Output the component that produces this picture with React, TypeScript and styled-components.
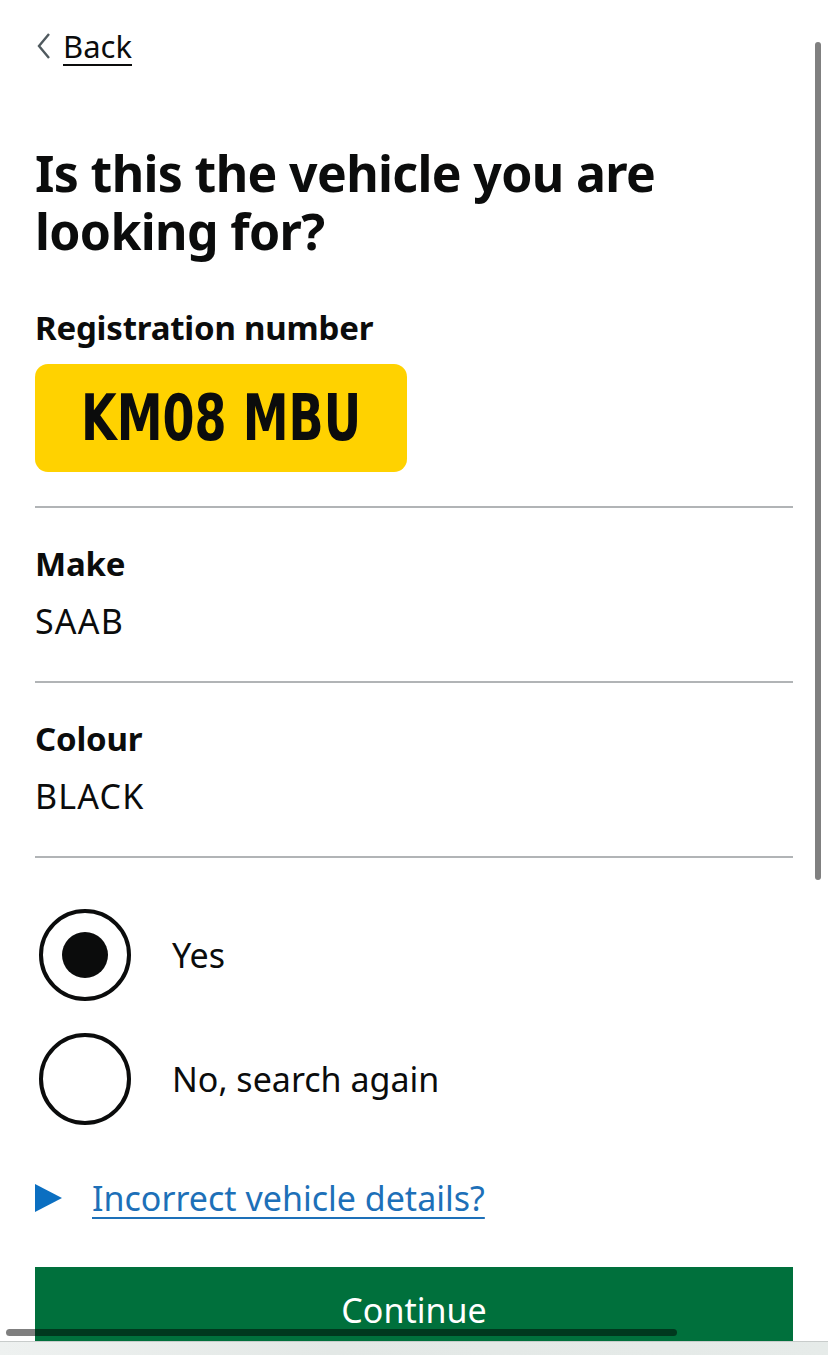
import React from "react";
import styled, { createGlobalStyle } from "styled-components";

const Global = createGlobalStyle`
  html, body { margin: 0; padding: 0; background: #ffffff; }
  body { font-family: "Noto Sans", "Open Sans", Arial, sans-serif; color: #0b0c0c; overflow: hidden; }
  * { box-sizing: border-box; }
`;

const Screen = styled.div`
  position: relative;
  width: 828px;
  height: 1355px;
  overflow: hidden;
  background: #ffffff;
`;

const Main = styled.main`
  display: flex;
  flex-direction: column;
  padding: 26px 35px 0;
`;

const BackLink = styled.a`
  display: inline-flex;
  align-items: center;
  gap: 10px;
  align-self: flex-start;
  font-size: 31px;
  line-height: 40px;
  color: #0b0c0c;
  text-decoration: underline;
  text-decoration-thickness: 2px;
  text-underline-offset: 6px;
`;

const Chevron = styled.svg`
  width: 18px;
  height: 28px;
  flex: none;
`;

const Heading = styled.h1`
  margin: 78px 0 0;
  font-size: 50px;
  line-height: 58px;
  font-weight: 700;
  letter-spacing: -0.65px;
`;

const Section = styled.section<{ $first?: boolean }>`
  display: flex;
  flex-direction: column;
  padding: ${(p) => (p.$first ? "48px 0 34px" : "36px 0 40px")};
  border-bottom: 2px solid #b1b4b6;
`;

const Key = styled.div`
  font-size: 33px;
  font-weight: 700;
  line-height: 40px;
  letter-spacing: -0.2px;
`;

const Value = styled.div`
  font-size: 34px;
  line-height: 40px;
  letter-spacing: 1.2px;
  margin-top: 17px;
`;

const Plate = styled.div`
  margin-top: 16px;
  width: 372px;
  height: 108px;
  border-radius: 13px;
  background: #ffd200;
  display: flex;
  align-items: center;
  justify-content: center;
  overflow: hidden;
`;

const PlateText = styled.span`
  display: inline-block;
  white-space: nowrap;
  font-family: "DejaVu Sans Condensed", "DejaVu Sans", sans-serif;
  font-stretch: condensed;
  font-weight: 700;
  font-size: 64px;
  line-height: 1;
  color: #0b0c0c;
  transform: scaleX(0.8);
`;

const Radios = styled.div`
  display: flex;
  flex-direction: column;
  gap: 32px;
  margin-top: 51px;
`;

const RadioRow = styled.label`
  display: flex;
  align-items: center;
  gap: 41px;
  padding-left: 4px;
  font-size: 34px;
  line-height: 40px;
`;

const RadioCircle = styled.span<{ $checked?: boolean }>`
  width: 92px;
  height: 92px;
  border-radius: 50%;
  border: 4px solid #0b0c0c;
  flex: none;
  display: flex;
  align-items: center;
  justify-content: center;
  &::after {
    content: "";
    width: 46px;
    height: 46px;
    border-radius: 50%;
    background: #0b0c0c;
    display: ${(p) => (p.$checked ? "block" : "none")};
  }
`;

const Details = styled.div`
  display: flex;
  align-items: center;
  gap: 30px;
  margin-top: 53px;
  font-size: 34px;
  line-height: 40px;
  color: #1d70b8;
`;

const Triangle = styled.span`
  width: 0;
  height: 0;
  border-top: 14px solid transparent;
  border-bottom: 14px solid transparent;
  border-left: 27px solid #0b6fc1;
  flex: none;
`;

const DetailsLink = styled.a`
  color: #1d70b8;
  text-decoration: underline;
  text-decoration-thickness: 2px;
  text-underline-offset: 6px;
`;

const Button = styled.button`
  margin-top: 49px;
  width: 100%;
  height: 90px;
  border: none;
  background: #00703c;
  color: #ffffff;
  font-family: inherit;
  font-size: 34px;
  line-height: 40px;
  padding: 23px 0 0;
  display: flex;
  justify-content: center;
  align-items: flex-start;
`;

const VScroll = styled.div`
  position: absolute;
  top: 42px;
  right: 7px;
  width: 6px;
  height: 838px;
  border-radius: 3px;
  background: #808080;
`;

const HScroll = styled.div`
  position: absolute;
  left: 6px;
  top: 1329px;
  width: 671px;
  height: 7px;
  border-radius: 4px;
  background: rgba(0, 0, 0, 0.5);
`;

const Chrome = styled.div`
  position: absolute;
  left: 0;
  right: 0;
  bottom: 0;
  height: 14px;
  border-top: 1px solid #c8cccb;
  background: linear-gradient(90deg, #eef1f0, #e3e8e6 40%, #e6ebe9);
`;

export default function App() {
  return (
    <Screen>
      <Global />
      <Main>
        <BackLink href="#">
          <Chevron viewBox="0 0 18 28">
            <path d="M14 2 L4 14 L14 26" fill="none" stroke="#505a5f" strokeWidth="2.4" />
          </Chevron>
          Back
        </BackLink>
        <Heading>Is this the vehicle you are looking for?</Heading>
        <Section $first>
          <Key>Registration number</Key>
          <Plate>
            <PlateText>KM08 MBU</PlateText>
          </Plate>
        </Section>
        <Section>
          <Key>Make</Key>
          <Value>SAAB</Value>
        </Section>
        <Section>
          <Key>Colour</Key>
          <Value>BLACK</Value>
        </Section>
        <Radios>
          <RadioRow>
            <RadioCircle $checked />
            Yes
          </RadioRow>
          <RadioRow>
            <RadioCircle />
            No, search again
          </RadioRow>
        </Radios>
        <Details>
          <Triangle />
          <DetailsLink href="#">Incorrect vehicle details?</DetailsLink>
        </Details>
        <Button>Continue</Button>
      </Main>
      <VScroll />
      <HScroll />
      <Chrome />
    </Screen>
  );
}
